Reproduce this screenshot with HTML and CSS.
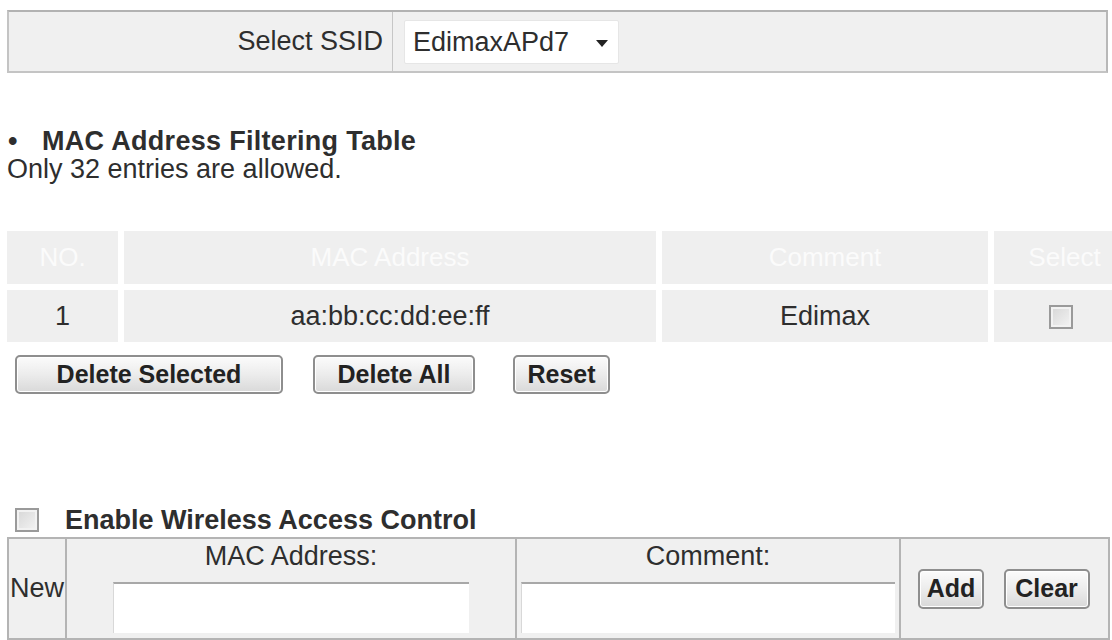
FILE: index.html
```html
<!DOCTYPE html>
<html lang="en">
<head>
    <meta charset="UTF-8">
    <title>MAC Address Filtering</title>
    <link rel="stylesheet" href="styles.css">
</head>
<body>
    <div class="ssid-bar">
        <div class="ssid-label">Select SSID</div>
        <div class="ssid-field">
            <span class="select-wrap">
                <select class="ssid-select">
                    <option>EdimaxAPd7</option>
                </select>
            </span>
        </div>
    </div>

    <h2 class="section-title"><span class="bullet">&bull;</span>MAC Address Filtering Table</h2>
    <p class="hint">Only 32 entries are allowed.</p>

    <div class="table-clip">
        <table class="filter-table">
            <colgroup>
                <col class="col-no">
                <col class="col-mac">
                <col class="col-comment">
                <col class="col-select">
            </colgroup>
            <tr class="head-row">
                <th>NO.</th>
                <th>MAC Address</th>
                <th>Comment</th>
                <th>Select</th>
            </tr>
            <tr class="data-row">
                <td>1</td>
                <td>aa:bb:cc:dd:ee:ff</td>
                <td>Edimax</td>
                <td><input type="checkbox" class="check"></td>
            </tr>
        </table>
    </div>

    <div class="actions">
        <button class="btn btn-del-sel">Delete Selected</button>
        <button class="btn btn-del-all">Delete All</button>
        <button class="btn btn-reset">Reset</button>
    </div>

    <label class="enable-row">
        <input type="checkbox" class="check">
        <span>Enable Wireless Access Control</span>
    </label>

    <table class="new-table">
        <tr>
            <td class="new-cell">New</td>
            <td class="field-cell field-mac">
                <div class="field-label">MAC Address:</div>
                <input type="text" class="text-input input-mac">
            </td>
            <td class="field-cell field-comment">
                <div class="field-label">Comment:</div>
                <input type="text" class="text-input input-comment">
            </td>
            <td class="btn-cell">
                <button class="btn btn-add">Add</button>
                <button class="btn btn-clear">Clear</button>
            </td>
        </tr>
    </table>
</body>
</html>
```

FILE: styles.css
```css
html, body {
    overflow: hidden;
}
body {
    margin: 0;
    padding: 10px 0 0 7px;
    font-family: 'Liberation Sans', Arial, sans-serif;
    font-size: 27px;
    color: #2e2e2e;
    background: #fff;
}

/* SSID selector bar */
.ssid-bar {
    display: flex;
    width: 1101px;
    height: 63px;
    box-sizing: border-box;
    background-color: #f0f0f0;
    border: 2px solid #c4c4c4;
    border-top-color: #b2b2b2;
    border-right-color: #b8b8b8;
}
.ssid-label {
    width: 384px;
    box-sizing: border-box;
    padding-right: 9px;
    border-right: 1px solid #c6c6c6;
    display: flex;
    align-items: center;
    justify-content: flex-end;
}
.ssid-field {
    display: flex;
    align-items: center;
    padding-left: 11px;
}
.select-wrap {
    position: relative;
    display: inline-block;
}
.select-wrap::after {
    content: "";
    position: absolute;
    right: 11px;
    top: 20px;
    border-left: 6px solid transparent;
    border-right: 6px solid transparent;
    border-top: 7px solid #222;
    pointer-events: none;
}
.ssid-select {
    appearance: none;
    -webkit-appearance: none;
    width: 215px;
    height: 44px;
    padding: 0 0 0 8px;
    font-family: inherit;
    font-size: 27px;
    color: #2e2e2e;
    background: #fff;
    border: 1px solid #e6e6e6;
    border-radius: 2px;
}

/* section heading */
.section-title {
    margin: 54px 0 0 0;
    font-size: 27px;
    line-height: 28px;
    font-weight: bold;
    letter-spacing: 0.3px;
}
.bullet {
    display: inline-block;
    width: 34px;
    padding-left: 1px;
}
.hint {
    margin: 0;
    line-height: 29px;
}

/* filter table */
.table-clip {
    width: 1140px;
    margin: 41px 0 0 -6px;
}
.filter-table {
    table-layout: fixed;
    width: 1140px;
    border-spacing: 6px;
}
.col-no { width: 111px; }
.col-mac { width: 532px; }
.col-comment { width: 326px; }
.col-select { width: 141px; }
.filter-table th,
.filter-table td {
    background-color: #efefef;
    text-align: center;
    padding: 0;
}
.filter-table th {
    height: 53px;
    font-weight: normal;
    font-size: 26px;
    color: #fbfbfb;
}
.filter-table td {
    height: 52px;
}
.filter-table td .check {
    margin-left: -8px;
}

.check {
    appearance: none;
    -webkit-appearance: none;
    width: 24px;
    height: 24px;
    margin: 0;
    vertical-align: middle;
    border: 2px solid #9a9a9a;
    background: linear-gradient(135deg, #d6d6d6, #f4f4f4);
    box-shadow: inset 0 0 0 2px #f2f2f2;
}

/* buttons */
.actions {
    display: flex;
    margin: 7px 0 0 8px;
}
.btn {
    height: 39px;
    padding: 0;
    font-family: inherit;
    font-size: 25px;
    font-weight: bold;
    color: #222;
    background: linear-gradient(#fbfbfb, #ececec 50%, #d9d9d9);
    border: 2px solid #8e8e8e;
    border-radius: 5px;
    box-shadow: inset 0 0 0 1px #fff;
}
.btn-del-sel { width: 268px; }
.btn-del-all { width: 162px; margin-left: 30px; }
.btn-reset { width: 97px; margin-left: 38px; }

.enable-row {
    display: flex;
    align-items: center;
    height: 28px;
    margin: 112px 0 0 8px;
    font-weight: bold;
}
.enable-row .check {
    margin-right: 26px;
}

/* new entry table */
.new-table {
    width: 1103px;
    margin-top: 3px;
    border-collapse: collapse;
    table-layout: fixed;
    background-color: #f0f0f0;
}
.new-table td {
    border: 2px solid #b4b4b4;
    padding: 0;
}
.new-table .new-cell {
    width: 55px;
    padding-left: 1px;
    vertical-align: middle;
}
.field-mac { width: 448px; }
.field-comment { width: 382px; }
.new-table .field-cell {
    text-align: center;
    vertical-align: top;
    padding-bottom: 5px;
}
.field-label {
    height: 43px;
    line-height: 30px;
    padding-top: 2px;
    box-sizing: border-box;
}
.text-input {
    display: block;
    height: 51px;
    margin: 0 auto;
    box-sizing: border-box;
    background: #fff;
    border: none;
    border-top: 2px solid #a8a8a8;
    border-left: 1px solid #d8d8d8;
    font-family: inherit;
    font-size: 24px;
}
.input-mac { width: 356px; }
.input-comment { width: 374px; }
.new-table .btn-cell {
    vertical-align: middle;
    padding-left: 17px;
}
.btn-add { width: 66px; height: 40px; }
.btn-clear { width: 86px; height: 40px; margin-left: 12px; }
```
